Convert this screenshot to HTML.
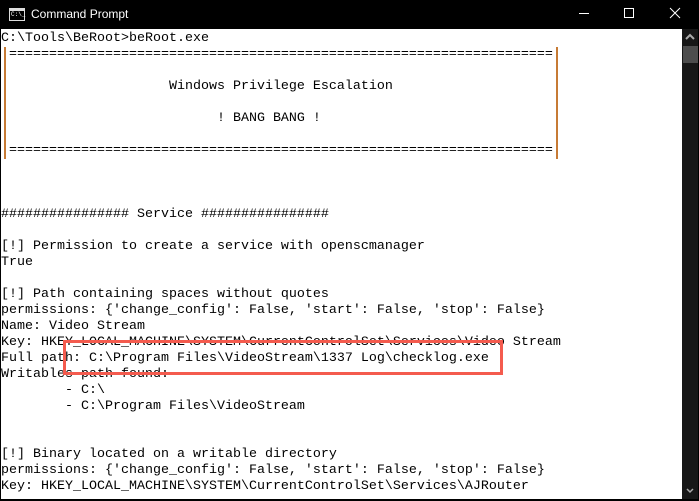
<!DOCTYPE html>
<html><head><meta charset="utf-8"><style>
html,body{margin:0;padding:0;}
body{width:699px;height:501px;overflow:hidden;background:#000;position:relative;font-family:"Liberation Mono",monospace;}
#title{position:absolute;left:0;top:0;width:699px;height:29px;background:#000;color:#fff;font-family:"Liberation Sans",sans-serif;font-size:12px;}
#title .t{position:absolute;left:31px;top:7px;}
#icon{position:absolute;left:9px;top:8px;width:14px;height:11px;border:1px solid #ddd;background:#000;}
#icon:before{content:"";position:absolute;left:0;top:0;width:14px;height:2px;background:#ddd;}
#icon span{position:absolute;left:1px;top:2px;font-size:6px;color:#fff;font-family:"Liberation Mono",monospace;line-height:8px;}
#content{position:absolute;left:1px;top:29px;width:681px;height:470px;background:#fff;overflow:hidden;}
pre{margin:0;padding-top:2px;font-size:13.33px;line-height:16px;color:#000;font-family:"Liberation Mono",monospace;}
.p{position:absolute;width:2px;background:#c77b35;}
#sb{position:absolute;left:682px;top:29px;width:16px;height:470px;background:#171717;}
#thumb{position:absolute;left:1px;top:17px;width:15px;height:17px;background:#4d4d4d;}
#box{position:absolute;left:63px;top:340px;width:434px;height:29px;border:3px solid #f45b4e;}
.ctl{position:absolute;top:0;height:29px;}
</style></head><body>
<div id="title"><div id="icon"><span>C:\_</span></div><div class="t">Command Prompt</div>
<svg class="ctl" style="left:540px" width="159" height="29">
<line x1="39" y1="13.5" x2="49" y2="13.5" stroke="#fff" stroke-width="1"/>
<rect x="84.5" y="8.5" width="9" height="9" fill="none" stroke="#fff"/>
<path d="M130 8 L140 18 M140 8 L130 18" stroke="#fff" stroke-width="1"/>
</svg></div>
<div id="content"><pre>C:\Tools\BeRoot&gt;beRoot.exe
 ====================================================================

                     Windows Privilege Escalation

                           ! BANG BANG !

 ====================================================================



################ Service ################

[!] Permission to create a service with openscmanager
True

[!] Path containing spaces without quotes
permissions: {'change_config': False, 'start': False, 'stop': False}
Name: Video Stream
Key: HKEY_LOCAL_MACHINE\SYSTEM\CurrentControlSet\Services\Video Stream
Full path: C:\Program Files\VideoStream\1337 Log\checklog.exe
Writables path found:
        - C:\
        - C:\Program Files\VideoStream


[!] Binary located on a writable directory
permissions: {'change_config': False, 'start': False, 'stop': False}
Key: HKEY_LOCAL_MACHINE\SYSTEM\CurrentControlSet\Services\AJRouter
</pre>
<div class="p" style="left:3px;top:18px;height:112px"></div>
<div class="p" style="left:555px;top:18px;height:112px"></div>
</div>
<div id="box"></div>
<div id="sb"><svg width="16" height="16" style="position:absolute;top:0"><path d="M4 10 L8 6 L12 10" stroke="#aaa" stroke-width="2" fill="none"/></svg><div id="thumb"></div>
<svg width="16" height="16" style="position:absolute;top:454px"><path d="M5 6 L8 9 L11 6" stroke="#aaa" stroke-width="1.5" fill="none"/></svg></div>
</body></html>
